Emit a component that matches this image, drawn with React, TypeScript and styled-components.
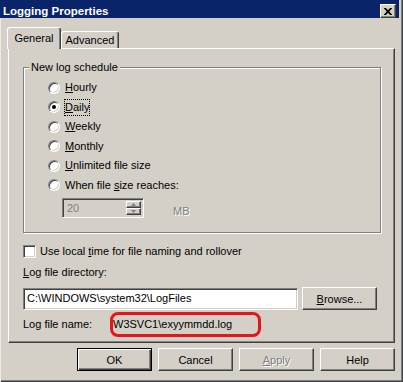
import React from "react";
import styled, { createGlobalStyle, css } from "styled-components";

const GlobalStyle = createGlobalStyle`
  html, body {
    margin: 0;
    padding: 0;
    background: #d4d0c8;
  }
  body {
    font-family: "Liberation Sans", Arial, sans-serif;
    font-size: 11px;
    color: #000;
  }
`;

const Window = styled.div`
  width: 403px;
  height: 382px;
  box-sizing: border-box;
  background: #d4d0c8;
  display: flex;
  flex-direction: column;
  overflow: hidden;
  box-shadow: inset 1px 0 #ecebe7, inset -1px -1px #404040,
    inset -2px -2px #808080;
`;

const TitleBar = styled.div`
  height: 18px;
  margin-right: 4px;
  padding: 0 3px 0 3px;
  background: #0a246a;
  display: flex;
  align-items: flex-start;
  justify-content: space-between;
`;

const Title = styled.span`
  margin-top: 5px;
  color: #fff;
  font-weight: bold;
  font-size: 11.5px;
  line-height: 13px;
`;

const CloseButton = styled.div`
  box-sizing: border-box;
  width: 16px;
  height: 14px;
  margin-top: 4px;
  background: #d4d0c8;
  border: 1px solid;
  border-color: #fff #404040 #404040 #fff;
  box-shadow: inset -1px -1px #808080;
  display: flex;
  align-items: center;
  justify-content: center;
`;

const Body = styled.div`
  display: flex;
  flex-direction: column;
  padding: 9px 8px 0;
`;

const TabRow = styled.div`
  display: flex;
  align-items: flex-end;
  height: 22px;
  margin-left: -1px;
  margin-bottom: -1px;
  position: relative;
  z-index: 1;
`;

const Tab = styled.div<{ $active?: boolean; $width: number }>`
  box-sizing: border-box;
  width: ${(p) => p.$width}px;
  background: #d4d0c8;
  border-top: 1px solid #fff;
  border-left: 1px solid #fff;
  border-right: 1px solid #404040;
  border-radius: 3px 3px 0 0;
  box-shadow: inset -1px 0 #808080;
  text-align: center;
  line-height: 13px;
  ${(p) =>
    p.$active
      ? css`
          height: 22px;
          padding-top: 4px;
        `
      : css`
          height: 17px;
          margin-bottom: 1px;
          padding-top: 2px;
        `}
`;

const Panel = styled.div`
  box-sizing: border-box;
  height: 295px;
  border: 1px solid;
  border-color: #fff #404040 #404040 #fff;
  box-shadow: inset -1px -1px #808080;
  padding: 18px 13px 0 14px;
  display: flex;
  flex-direction: column;
`;

const GroupBox = styled.div`
  position: relative;
  border: 1px solid #808080;
  box-shadow: inset 1px 1px #fff, 1px 1px #fff;
  padding: 10px 0 14px 24px;
`;

const GroupLabel = styled.span`
  position: absolute;
  top: -7px;
  left: 5px;
  padding: 0 2px;
  background: #d4d0c8;
  line-height: 13px;
`;

const OptionRow = styled.div`
  height: 19.5px;
  display: flex;
  align-items: center;
`;

const RadioCircle = styled.span<{ $checked?: boolean }>`
  box-sizing: border-box;
  width: 12px;
  height: 12px;
  flex: none;
  border-radius: 50%;
  background: #fff;
  border: 1px solid;
  border-color: #808080 #fff #fff #808080;
  box-shadow: inset 1px 1px #404040, inset -1px -1px #d4d0c8;
  display: flex;
  align-items: center;
  justify-content: center;
  &::after {
    content: "";
    width: 4px;
    height: 4px;
    border-radius: 50%;
    background: #000;
    display: ${(p) => (p.$checked ? "block" : "none")};
  }
`;

const OptionLabel = styled.span<{ $focus?: boolean }>`
  margin-left: 4px;
  line-height: 15px;
  border: 1px dotted ${(p) => (p.$focus ? "#000" : "transparent")};
  white-space: nowrap;
`;

const Key = styled.span`
  text-decoration: underline;
  text-underline-offset: 1px;
`;

const SpinRow = styled.div`
  display: flex;
  align-items: center;
  height: 20px;
  margin-top: 3px;
  padding-left: 14px;
`;

const SpinBox = styled.div`
  box-sizing: border-box;
  width: 82px;
  height: 20px;
  display: flex;
  padding: 2px;
  background: #d4d0c8;
  border: 1px solid;
  border-color: #808080 #fff #fff #808080;
  box-shadow: inset 1px 1px #404040, inset -1px -1px #d4d0c8;
`;

const SpinValue = styled.span`
  flex: 1;
  padding-left: 2px;
  color: #808080;
  line-height: 14px;
`;

const SpinButtons = styled.div`
  width: 15px;
  display: flex;
  flex-direction: column;
`;

const SpinButton = styled.div`
  flex: 1;
  box-sizing: border-box;
  background: #d4d0c8;
  border: 1px solid;
  border-color: #fff #404040 #404040 #fff;
  box-shadow: inset -1px -1px #808080;
  display: flex;
  align-items: center;
  justify-content: center;
`;

const Unit = styled.span`
  align-self: flex-end;
  margin-left: 29px;
  line-height: 13px;
  color: #808080;
  text-shadow: 1px 1px #fff;
`;

const CheckRow = styled.div`
  display: flex;
  align-items: center;
  height: 13px;
  margin-top: 12px;
`;

const CheckBox = styled.span`
  box-sizing: border-box;
  width: 13px;
  height: 13px;
  flex: none;
  background: #fff;
  border: 1px solid;
  border-color: #808080 #fff #fff #808080;
  box-shadow: inset 1px 1px #404040, inset -1px -1px #d4d0c8;
`;

const CheckLabel = styled.span`
  margin-left: 4px;
  line-height: 13px;
  white-space: nowrap;
`;

const FieldLabel = styled.div`
  margin-top: 8px;
  line-height: 13px;
`;

const InputRow = styled.div`
  display: flex;
  align-items: flex-start;
  gap: 4px;
  margin-top: 8px;
  height: 23px;
`;

const TextInput = styled.div`
  box-sizing: border-box;
  width: 275px;
  height: 22px;
  margin-top: 1px;
  padding: 0 3px;
  background: #fff;
  border: 1px solid;
  border-color: #808080 #fff #fff #808080;
  box-shadow: inset 1px 1px #404040, inset -1px -1px #d4d0c8;
  line-height: 19px;
  white-space: nowrap;
`;

const Button = styled.button<{ $default?: boolean }>`
  box-sizing: border-box;
  width: 75px;
  height: 23px;
  padding: 0;
  font: inherit;
  color: #000;
  background: #d4d0c8;
  border: 1px solid;
  border-color: #fff #404040 #404040 #fff;
  box-shadow: inset -1px -1px #808080;
  ${(p) =>
    p.$default &&
    css`
      border-color: #000;
      box-shadow: inset 1px 1px #fff, inset -1px -1px #404040,
        inset -2px -2px #808080;
    `}
  &:disabled {
    color: #808080;
    text-shadow: 1px 1px #fff;
  }
`;

const NameRow = styled.div`
  display: flex;
  align-items: center;
  height: 25px;
  margin-top: 2px;
`;

const NameLabel = styled.span`
  width: 87px;
  line-height: 13px;
`;

const Highlight = styled.span`
  box-sizing: border-box;
  width: 151px;
  height: 25px;
  border: 3px solid #e3161b;
  border-radius: 8px;
  line-height: 19px;
  white-space: nowrap;
`;

const ButtonRow = styled.div`
  display: flex;
  justify-content: flex-end;
  gap: 6px;
  margin-top: 5px;
`;

const CloseGlyph = () => (
  <svg width="8" height="7" viewBox="0 0 8 7">
    <path
      d="M0 0h2l2 2.2L6 0h2v0.6L5.2 3.5 8 6.4V7H6L4 4.8 2 7H0v-0.6l2.8-2.9L0 0.6z"
      fill="#000"
    />
  </svg>
);

const Arrow = ({ up }: { up?: boolean }) => (
  <svg width="5" height="3" viewBox="0 0 5 3">
    <path d={up ? "M2.5 0L5 3H0z" : "M0 0h5L2.5 3z"} fill="#808080" />
  </svg>
);

const schedules = [
  { pre: "", key: "H", rest: "ourly" },
  { pre: "", key: "D", rest: "aily", checked: true },
  { pre: "", key: "W", rest: "eekly" },
  { pre: "", key: "M", rest: "onthly" },
  { pre: "", key: "U", rest: "nlimited file size" },
  { pre: "When file ", key: "s", rest: "ize reaches:" },
];

const App = () => {
  return (
    <>
      <GlobalStyle />
      <Window>
        <TitleBar>
          <Title>Logging Properties</Title>
          <CloseButton>
            <CloseGlyph />
          </CloseButton>
        </TitleBar>

        <Body>
          <TabRow>
            <Tab $active $width={54}>General</Tab>
            <Tab $width={58}>Advanced</Tab>
          </TabRow>

          <Panel>
            <GroupBox>
              <GroupLabel>New log schedule</GroupLabel>
              {schedules.map((s) => (
                <OptionRow key={s.key}>
                  <RadioCircle $checked={s.checked} />
                  <OptionLabel $focus={s.checked}>
                    {s.pre}
                    <Key>{s.key}</Key>
                    {s.rest}
                  </OptionLabel>
                </OptionRow>
              ))}
              <SpinRow>
                <SpinBox>
                  <SpinValue>20</SpinValue>
                  <SpinButtons>
                    <SpinButton>
                      <Arrow up />
                    </SpinButton>
                    <SpinButton>
                      <Arrow />
                    </SpinButton>
                  </SpinButtons>
                </SpinBox>
                <Unit>MB</Unit>
              </SpinRow>
            </GroupBox>

            <CheckRow>
              <CheckBox />
              <CheckLabel>
                Use local <Key>t</Key>ime for file naming and rollover
              </CheckLabel>
            </CheckRow>

            <FieldLabel>
              <Key>L</Key>og file directory:
            </FieldLabel>
            <InputRow>
              <TextInput>{"C:\\WINDOWS\\system32\\LogFiles"}</TextInput>
              <Button>
                <Key>B</Key>rowse...
              </Button>
            </InputRow>

            <NameRow>
              <NameLabel>Log file name:</NameLabel>
              <Highlight>{"W3SVC1\\exyymmdd.log"}</Highlight>
            </NameRow>
          </Panel>

          <ButtonRow>
            <Button $default>OK</Button>
            <Button>Cancel</Button>
            <Button disabled>
              <Key>A</Key>pply
            </Button>
            <Button>Help</Button>
          </ButtonRow>
        </Body>
      </Window>
    </>
  );
};

export default App;
